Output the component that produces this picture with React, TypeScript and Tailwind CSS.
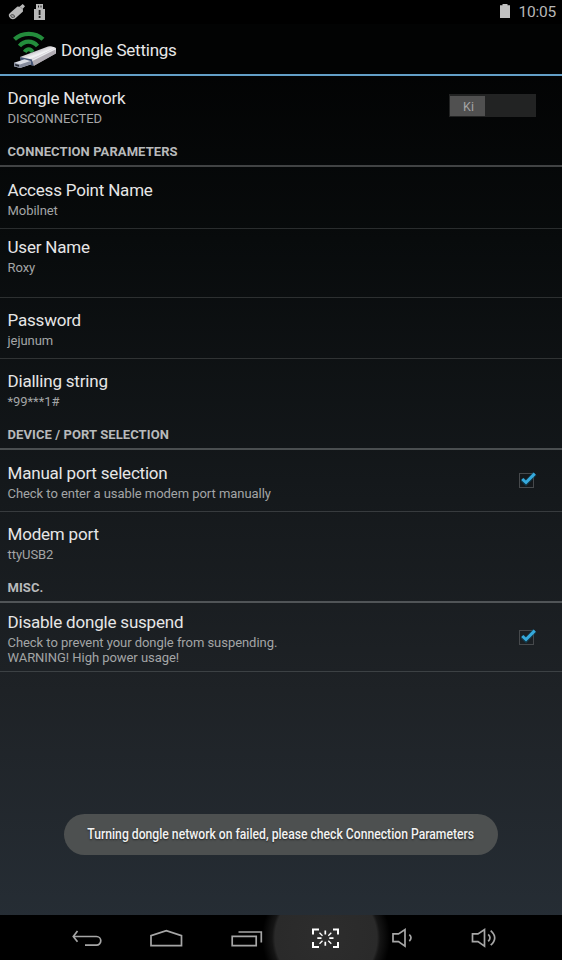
import type { ReactNode } from "react";

interface RowProps {
    title: string;
    summary: string;
    className: string;
    children?: ReactNode;
}

function Row({ title, summary, className, children }: RowProps) {
    return (
        <div className={`flex items-start justify-between pl-[7.5px] ${className}`}>
            <div>
                <p className="text-[17px] leading-[20px] tracking-[-0.2px] text-[#e6e6e6] whitespace-nowrap">{title}</p>
                <p className="mt-[3px] text-[13px] leading-[15px] tracking-[-0.05px] text-[#a3a5a6] whitespace-pre-line">{summary}</p>
            </div>
            {children}
        </div>
    );
}

function Category({ label, className }: { label: string; className: string }) {
    return (
        <div className={`flex items-start border-b-2 pl-[7.5px] ${className}`}>
            <h2 className="text-[13px] leading-[16px] tracking-[0.09px] font-bold text-[#b8babb]">{label}</h2>
        </div>
    );
}

function Check({ className }: { className: string }) {
    return (
        <svg className={className} width="20" height="18" viewBox="0 0 20 18" fill="none">
            <rect x="1.5" y="2.5" width="14" height="14" stroke="#46494c" />
            <path d="M4.2 8.4 8 12 16.8 2.6" stroke="#0b526e" strokeWidth="5" opacity=".45" />
            <path d="M4.2 8 8 11.5 16.8 2.6" stroke="#35a9dc" strokeWidth="3" />
        </svg>
    );
}

function DongleLogo() {
    return (
        <svg width="46" height="42" viewBox="0 0 46 42" fill="none">
            <defs>
                <linearGradient id="body" x1="22" y1="20" x2="28" y2="36" gradientUnits="userSpaceOnUse">
                    <stop stopColor="#a9a5ab" />
                    <stop offset=".45" stopColor="#f4f4f6" />
                    <stop offset="1" stopColor="#89858d" />
                </linearGradient>
            </defs>
            <g stroke="#238c3c">
                <path d="M2.5 11.3C10 4 23.5 4 31 11.3" strokeWidth="4.2" />
                <path d="M7.5 18C12.5 12.2 20.5 12.2 25.5 18" strokeWidth="4.2" />
                <path d="M12.7 24C15 20.3 18.5 20.3 20.7 24" strokeWidth="4.2" />
            </g>
            <path d="M8 29 36 18.5Q37.5 18 39 18.3L42.5 19.2Q44 19.6 44 21V25.5L22 37.8 10 35Z" fill="url(#body)" />
            <path d="M8 29 20 31.5 22 37.8 9 35Z" fill="#465676" />
            <path d="m20 31.5 23.5-11.7v5.7L22 37.8Z" fill="#b0acb3" />
            <path d="m20 31.5 23.5-11.7v1.6L20.5 33Z" fill="#e9e9ec" />
            <path d="m2 34.8 10.5-3.5 6 1.7v3.4L8 40l-6-1.7Z" fill="#d9dce3" />
            <path d="m2 34.8 6 1.8 10.5-3.6v3.4L8 40l-6-1.7Z" fill="#858b9b" />
            <path d="m3.2 36 3.8 1.1v1.6l-3.8-1.1Z" fill="#20252e" />
        </svg>
    );
}

function StatusBar() {
    return (
        <div className="flex h-6 items-center justify-between bg-black pl-2 pr-[6px]">
            <div className="flex items-center gap-[8px]">
                <svg width="18" height="18" viewBox="0 0 18 18" fill="none">
                    <path d="M1 13.5Q0 11.5 2 10L9.5 3.5l2 .2L14.7 1l2.3 2.3-2.2 2.5.2 2.7-7.5 6.8Q5 17 2.5 15.5Z" fill="#b8b8b8" />
                    <path d="m2.5 12.3 1.4 2.2 2.8-.5-.8-2-1.9-.4Z" fill="#a8a8a8" stroke="#484848" strokeWidth=".9" />
                    <path d="m12.7 4.2 1.6 1.6" stroke="#777" />
                </svg>
                <svg width="11" height="16" viewBox="0 0 11 16">
                    <path d="M2 0h7v5h2v11H0V5h2Z" fill="#b8b8b8" />
                    <path d="M4 1.5h1v2H4Zm2.5 0h1v2h-1ZM4.7 6h1.8v5H4.7Zm0 6h1.8v2H4.7Z" fill="#202020" />
                </svg>
            </div>
            <div className="flex items-center gap-[8px]">
                <svg className="-mt-[2px]" width="10" height="14" viewBox="0 0 10 14">
                    <path d="M2.5 0h5v1.2H10V14H0V1.2h2.5Z" fill="#c0c0c0" />
                </svg>
                <span className="text-[15.5px] leading-6 tracking-[-0.2px] text-[#b8b8b8]">10:05</span>
            </div>
        </div>
    );
}

function NavBar() {
    return (
        <nav className="h-[45px] bg-black bg-[radial-gradient(circle_at_326px_23px,#2d2d2d_0px,#2a2a2a_51px,#151515_54px,#000000_64px)]">
            <svg width="562" height="45" viewBox="0 0 562 45" fill="none" stroke="#a6a6a6" strokeWidth="1.7">
                <path d="m77.5 16-4.2 5.4 4.2 5.4M74 21.5h22.5a4.3 4.3 0 0 1 0 8.6H85" />
                <path d="M151 30.7V20.7L166.3 15.7l15.2 5v10Z" />
                <path d="M232.2 21.3h24v9.4h-24ZM238.5 17h22.8v10.5" />
                <g stroke="#ffffff" strokeWidth="2">
                    <path d="M313 19.5v-5h6M333 14.5h5v5M338 27v5h-5M319 32h-6v-5" />
                    <path d="M325.3 15.5v4M325.3 26.7v4M317.3 23.2h4.2M329.3 23.2h4.2" strokeWidth="1.7" />
                    <path d="m319.5 17.8 3 3M331.3 17.8l-3 3M319.5 28.7l3-3M331.3 28.7l-3-3" strokeWidth="1.3" />
                </g>
                <path d="M393 18.9h5.5l6.5-4.3v16.5l-6.5-4.5H393Z" />
                <path d="M409.3 19.7q3.4 3.1 0 6.4" />
                <path d="M472.5 18.9h5.5l6.5-4.3v16.5l-6.5-4.5h-5.5Z" />
                <path d="M488.2 19.4q3.6 3.3 0 7M490.7 15.7q8 7.2 0 14.4" />
            </svg>
        </nav>
    );
}

export default function App() {
    return (
        <div className="relative flex h-[960px] w-[562px] flex-col overflow-hidden bg-[linear-gradient(#000000,#080b0c_25%,#14181b_50%,#1e2226_72%,#272f37)] font-['Roboto',sans-serif]">
            <StatusBar />
            <header className="flex h-[52px] items-center border-b-2 border-[#639fc7] bg-[#020303] pl-3">
                <DongleLogo />
                <h1 className="ml-[3px] mt-[2px] text-[17px] leading-[20px] tracking-[-0.24px] text-[#e8e8e8]">Dongle Settings</h1>
            </header>
            <main className="flex-1">
                <Row title="Dongle Network" summary="DISCONNECTED" className="h-[68px] pt-[12px]">
                    <div className="mr-[26px] mt-[6px] flex h-[23px] w-[87px] items-center bg-[#222323] p-px">
                        <span className="flex h-[20px] w-[35px] items-center justify-center bg-[#505050] pl-[2px] pt-[2px] text-[12.5px] leading-[15px] text-[#a5a5a5]">Ki</span>
                    </div>
                </Row>
                <Category label="CONNECTION PARAMETERS" className="h-[23px] border-[#414344]" />
                <Row title="Access Point Name" summary="Mobilnet" className="h-[62px] border-b border-[#2a2d2e] pt-[13px]" />
                <Row title="User Name" summary="Roxy" className="h-[69px] border-b border-[#2d3031] pt-[8px]" />
                <Row title="Password" summary="jejunum" className="h-[61px] border-b border-[#303334] pt-[12px]" />
                <Row title="Dialling string" summary="*99***1#" className="h-[68px] pt-[12px]" />
                <Category label="DEVICE / PORT SELECTION" className="h-[23px] border-[#4a4e50]" />
                <Row title="Manual port selection" summary="Check to enter a usable modem port manually" className="h-[62px] border-b border-[#373b3e] pt-[13px]">
                    <Check className="mr-[24px] mt-[8px]" />
                </Row>
                <Row title="Modem port" summary="ttyUSB2" className="h-[68px] pt-[12px]" />
                <Category label="MISC." className="h-[23px] border-[#505457]" />
                <Row title="Disable dongle suspend" summary={"Check to prevent your dongle from suspending.\nWARNING! High power usage!"} className="h-[69px] border-b border-[#3c4144] pt-[9px]">
                    <Check className="mr-[24px] mt-[16px]" />
                </Row>
            </main>
            <div className="absolute left-[64px] top-[814px] flex h-[41px] w-[434px] items-center justify-center rounded-full bg-[#4d5050]">
                <span className="scale-x-[.811] whitespace-nowrap pr-[2px] text-[15px] font-medium text-[#f2f2f2] [text-shadow:0_1px_2px_#222]">
                    Turning dongle network on failed, please check Connection Parameters
                </span>
            </div>
            <NavBar />
        </div>
    );
}
